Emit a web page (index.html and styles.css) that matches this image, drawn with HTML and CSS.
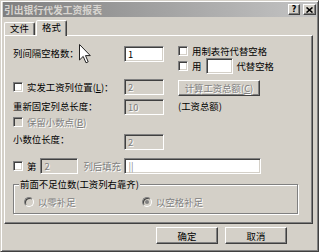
FILE: index.html
```html
<!DOCTYPE html>
<html>
<head>
<meta charset="utf-8">
<link rel="stylesheet" href="styles.css">
</head>
<body>
<div class="window">
  <div class="titlebar">
    <span class="title">引出银行代发工资报表</span>
    <div class="tbtns">
      <span class="tbtn help">?</span>
      <span class="tbtn close"><svg width="7" height="6" viewBox="0 0 7 6"><path d="M0.5 0.5 L6.5 5.5 M6.5 0.5 L0.5 5.5" stroke="#000" stroke-width="1.6"/></svg></span>
    </div>
  </div>
  <div class="tabs">
    <div class="tab">文件</div>
    <div class="tab active">格式</div>
  </div>
  <div class="panel">
    <div class="top">
      <div class="lf">
        <span class="lbl">列间隔空格数：</span>
        <span class="edit w40">1</span>
      </div>
      <div class="rt">
        <div class="chk-row"><span class="cb"></span><span>用制表符代替空格</span></div>
        <div class="chk-row r2"><span class="cb"></span><span>用</span><span class="edit w27 ml5"></span><span class="ml3">代替空格</span></div>
      </div>
    </div>
    <div class="row r3">
      <div class="lcol"><span class="cb"></span><span>实发工资列位置(<u>L</u>)：</span></div>
      <span class="edit w40 off dis">2</span>
      <span class="btn calc dis">计算工资总额(<u>C</u>)</span>
    </div>
    <div class="row r4">
      <span class="lcol lbl">重新固定列总长度：</span>
      <span class="edit w40 off dis">10</span>
      <span class="lbl ml14">(工资总额)</span>
    </div>
    <div class="row r5">
      <div class="lcol"><span class="cb off"></span><span class="dis">保留小数点(<u>B</u>)</span></div>
    </div>
    <div class="row r6">
      <span class="lcol lbl up">小数位长度：</span>
      <span class="edit w40 off dis">2</span>
    </div>
    <div class="row r7">
      <span class="cb"></span><span class="di">第</span>
      <span class="edit w38 off dis ml4">2</span>
      <span class="fill dis">列后填充</span>
      <span class="edit w137 pipe">||</span>
    </div>
    <div class="group">
      <span class="legend">前面不足位数(工资列右靠齐)</span>
      <div class="radios">
        <div class="ritem first"><span class="rb"></span><span class="dis">以零补足</span></div>
        <div class="ritem"><span class="rb on"></span><span class="dis">以空格补足</span></div>
      </div>
    </div>
  </div>
  <div class="btns">
    <span class="btn big">确定</span>
    <span class="btn big">取消</span>
  </div>
</div>
<svg class="cursor" width="12" height="20" viewBox="0 0 12 20"><path d="M0.5 0.5 L0.5 16 L4.2 12.4 L7 18.8 L9.2 17.8 L6.5 11.6 L11.3 11.6 Z" fill="#fff" stroke="#222" stroke-width="1" stroke-linejoin="miter"/></svg>
</body>
</html>
```
FILE: styles.css
```css
* { box-sizing: border-box; }
html, body { margin: 0; padding: 0; }
body {
  background: #d4d0c8;
  font-family: "Noto Sans CJK SC", "Noto Sans", sans-serif;
  font-size: 9.4px;
  line-height: 12px;
  color: #000;
}
.window {
  width: 319px;
  height: 252px;
  background: #d4d0c8;
  border: 1px solid;
  border-color: #d4d0c8 #404040 #404040 #d4d0c8;
  box-shadow: inset 1px 1px #fff, inset -1px -1px #808080;
  padding: 1px 1px 1px 2px;
}
.titlebar {
  height: 15px;
  display: flex;
  align-items: center;
  justify-content: space-between;
  background: linear-gradient(to right, #808080, #c4c4c4);
  padding: 0 1px 0 1px;
}
.title { color: #d8d5d0; font-weight: bold; font-size: 9.8px; white-space: nowrap; }
.tbtns { display: flex; gap: 3px; }
.tbtn {
  height: 11px;
  width: 12px;
  background: #d4d0c8;
  border: 1px solid;
  border-color: #fff #404040 #404040 #fff;
  box-shadow: inset -1px -1px #808080;
  display: flex;
  align-items: center;
  justify-content: center;
  font-family: "DejaVu Sans", sans-serif;
  font-weight: bold;
  font-size: 8px;
  line-height: 9px;
}
.tbtn.close { width: 13px; }
.tabs {
  display: flex;
  align-items: flex-end;
  height: 15px;
  margin-top: 3px;
  padding-left: 1px;
}
.tab {
  width: 31px;
  height: 13px;
  border: 1px solid;
  border-bottom: none;
  border-color: #fff #404040 transparent #fff;
  box-shadow: inset -1px 0 #808080;
  border-radius: 2px 2px 0 0;
  text-align: center;
  line-height: 11px;
}
.tab.active {
  width: 31px;
  height: 16px;
  margin-left: 1px;
  margin-bottom: -1px;
  position: relative;
  z-index: 1;
  background: #d4d0c8;
  line-height: 13px;
}
.panel {
  margin-left: 1px;
  width: 309px;
  height: 189px;
  border: 1px solid;
  border-color: #fff #404040 #404040 #fff;
  box-shadow: inset -1px -1px #808080;
  padding: 8px 0 0 8px;
}
.top { display: flex; height: 30px; }
.lf { width: 165px; display: flex; align-items: flex-start; padding-top: 2px; }
.lf .lbl { width: 111px; padding-top: 1px; }
.rt { display: flex; flex-direction: column; }
.chk-row { display: flex; align-items: center; height: 14px; white-space: nowrap; }
.chk-row.r2 { height: 16px; }
.cb {
  flex: none;
  width: 10px;
  height: 10px;
  background: #fff;
  border: 1px solid;
  border-color: #808080 #fff #fff #808080;
  box-shadow: inset 1px 1px #404040, inset -1px -1px #d4d0c8;
  margin-right: 4px;
}
.cb.off { background: #d4d0c8; }
.edit {
  flex: none;
  height: 16px;
  border: 1px solid;
  border-color: #808080 #fff #fff #808080;
  box-shadow: inset 1px 1px #404040, inset -1px -1px #d4d0c8;
  background: #fff;
  padding: 0 3px;
  display: flex;
  align-items: center;
  white-space: nowrap;
}
.edit.off { background: #d4d0c8; }
.w40 { width: 40px; }
.w27 { width: 27px; }
.w38 { width: 38px; }
.w137 { width: 137px; }
.ml3 { margin-left: 3px; }
.ml4 { margin-left: 4px; }
.ml5 { margin-left: 5px; }
.ml14 { margin-left: 14px; }
.dis { color: #808080; text-shadow: 1px 1px 0 #fff; }
.row { display: flex; align-items: center; height: 16px; white-space: nowrap; }
.lcol { width: 111px; flex: none; display: flex; align-items: center; }
.row .lbl { align-self: flex-start; padding-top: 1px; }
.row .lbl.up { margin-top: -1px; padding-top: 0; }
.r3 { margin-top: 5px; }
.r4 { margin-top: 4px; }
.r5 { margin-top: 1px; height: 12px; }
.r6 { margin-top: 6px; }
.r7 { margin-top: 8px; }
.btn {
  display: flex;
  align-items: center;
  justify-content: center;
  background: #d4d0c8;
  border: 1px solid;
  border-color: #fff #404040 #404040 #fff;
  box-shadow: inset -1px -1px #808080;
  white-space: nowrap;
}
.calc { width: 82px; height: 16px; margin-left: 14px; margin-top: 2px; }
.fill { width: 40px; margin-left: 5px; margin-right: 1px; }
.pipe { color: #8a8a8a; }
.group {
  margin-top: 10px;
  width: 285px;
  height: 30px;
  border: 1px solid #808080;
  box-shadow: inset 1px 1px #fff, 1px 1px #fff;
  display: flex;
  flex-direction: column;
  align-items: flex-start;
}
.legend {
  margin: -7px 0 0 5px;
  padding: 0 1px;
  background: #d4d0c8;
  line-height: 12px;
  white-space: nowrap;
}
.radios { display: flex; margin-top: 6px; height: 12px; align-items: center; padding-left: 10px; }
.ritem { display: flex; align-items: center; white-space: nowrap; }
.ritem.first { width: 118px; }
.rb {
  flex: none;
  position: relative;
  width: 10px;
  height: 10px;
  border-radius: 50%;
  border: 1px solid;
  border-color: #808080 #fff #fff #808080;
  box-shadow: inset 1px 1px #404040;
  background: #d4d0c8;
  margin-right: 4px;
}
.rb.on::after {
  content: "";
  position: absolute;
  left: 2px;
  top: 2px;
  width: 4px;
  height: 4px;
  border-radius: 50%;
  background: #808080;
}
.btns {
  display: flex;
  justify-content: flex-end;
  gap: 7px;
  margin-top: 3px;
  padding-right: 30px;
}
.btn.big { width: 62px; height: 17px; }
.cursor { position: absolute; left: 79px; top: 44px; }
```
